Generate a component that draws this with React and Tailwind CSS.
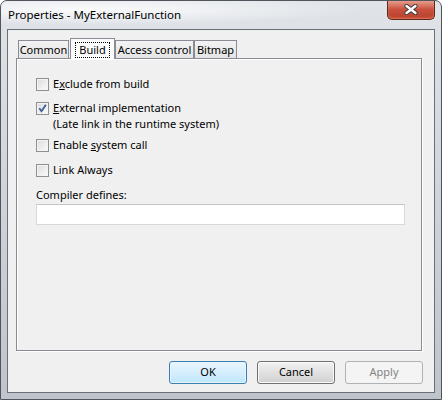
import React from "react";

const Check = ({ checked }) => (
  <span className="relative w-[13px] h-[13px] shrink-0 border border-[#8e8f8f] bg-gradient-to-br from-[#dcdcdc] to-[#fbfbfb] shadow-[inset_0_0_0_1px_#f4f4f4]">
    {checked && (
      <svg className="absolute left-[1px] top-[1px]" width="9" height="9" viewBox="0 0 9 9">
        <path d="M1.3 4.3 L3.5 7.2 L7.9 0.8" fill="none" stroke="#3f5a98" strokeWidth="1.8" />
      </svg>
    )}
  </span>
);

const CheckRow = ({ checked, children, className = "" }) => (
  <div className={"flex items-start " + className}>
    <div className="h-[16px] flex items-center">
      <Check checked={checked} />
    </div>
    <div className="ml-[4px] leading-[16px]">{children}</div>
  </div>
);

const Tab = ({ label, width, selected, className = "" }) =>
  selected ? (
    <div
      className={
        "relative z-10 h-[21px] -mb-px bg-[#fcfcfc] border border-b-0 border-[#898c95] flex justify-center pt-[3px] " +
        width +
        " " +
        className
      }
    >
      <span className="h-[16px] px-[3px] leading-[14px] border border-dotted border-black">{label}</span>
    </div>
  ) : (
    <div
      className={
        "h-[18px] bg-gradient-to-b from-[#f3f3f3] to-[#e4e4e4] border border-b-0 border-[#898c95] flex items-center justify-center leading-[16px] " +
        width +
        " " +
        className
      }
    >
      {label}
    </div>
  );

export default function App() {
  return (
    <div className="w-[442px] h-[400px] relative flex flex-col rounded-t-[7px] border border-[#50555c] bg-gradient-to-b from-[#e0e4e9] to-[#bfc4ca] text-[11px] text-black font-['Segoe_UI','Noto_Sans',sans-serif] overflow-hidden">
      <div className="h-[28px] shrink-0 flex items-center pl-[7px] text-[11.5px] bg-[radial-gradient(ellipse_at_20%_30%,rgba(255,255,255,0.85),rgba(255,255,255,0)_55%)]">
        Properties - MyExternalFunction
      </div>

      <div className="absolute top-[-1px] right-[6px] w-[48px] h-[20px] rounded-b-[5px] border border-t-0 border-[#5a2a22] bg-gradient-to-b from-[#e8a595] via-[#c8503c] to-[#b8402c] flex items-center justify-center shadow-[inset_0_-1px_2px_rgba(255,160,120,0.6)]">
        <svg width="14" height="11" viewBox="0 0 14 11">
          <path d="M2.5 2 L11.5 9 M11.5 2 L2.5 9" stroke="#3a3a3a" strokeWidth="4.2" strokeLinecap="round" />
          <path d="M2.5 2 L11.5 9 M11.5 2 L2.5 9" stroke="#ffffff" strokeWidth="2.4" strokeLinecap="round" />
        </svg>
      </div>

      <div className="flex-1 mx-[6px] mb-[6px] border border-[#6a7078] bg-[#f0f0f0] flex flex-col">
        <div className="mt-[8px] ml-[8px] w-[406px] flex flex-col">
          <div className="h-[20px] flex items-end">
            <Tab label="Common" width="w-[51px]" className="ml-[2px]" />
            <Tab label="Build" width="w-[45px]" selected className="ml-[1px]" />
            <Tab label="Access control" width="w-[79px]" />
            <Tab label="Bitmap" width="w-[43px]" />
          </div>
          <div className="h-[293px] border border-[#898c95] shadow-[inset_1px_1px_0_#ffffff,1px_1px_0_#ffffff] pl-[19px] pt-[17px]">
            <CheckRow>
              E<u>x</u>clude from build
            </CheckRow>
            <CheckRow checked className="mt-[8px]">
              <u>E</u>xternal implementation
              <br />
              (Late link in the runtime system)
            </CheckRow>
            <CheckRow className="mt-[5px]">
              Enable <u>s</u>ystem call
            </CheckRow>
            <CheckRow className="mt-[9px]">Link Always</CheckRow>
            <div className="mt-[9px] leading-[16px]">Compiler defines:</div>
            <div className="mt-[1px] w-[369px] h-[21px] bg-white border border-[#d5d9de] border-t-[#c2c6cc]" />
          </div>
        </div>

        <div className="mt-[10px] flex justify-end gap-[10px] pr-[11px]">
          <button className="w-[78px] h-[23px] rounded-[3px] border border-[#3c7fb1] bg-gradient-to-b from-[#eaf6fd] to-[#bee6fd] shadow-[inset_0_0_0_1px_#e8f4fb] text-[11px]">
            OK
          </button>
          <button className="w-[78px] h-[23px] rounded-[3px] border border-[#707070] bg-gradient-to-b from-[#f2f2f2] to-[#d0d0d0] shadow-[inset_0_0_0_1px_#fbfbfb] text-[11px]">
            Cancel
          </button>
          <button className="w-[78px] h-[23px] rounded-[3px] border border-[#adb2b5] bg-[#f4f4f4] text-[#838383] text-[11px]">
            Apply
          </button>
        </div>
      </div>
    </div>
  );
}
